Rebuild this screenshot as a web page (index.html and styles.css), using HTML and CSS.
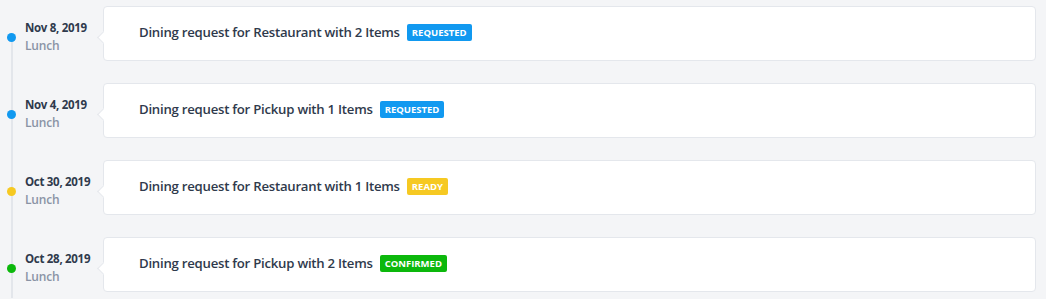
FILE: index.html
```html
<!DOCTYPE html>
<html lang="en">
<head>
    <meta charset="UTF-8">
    <meta name="viewport" content="width=device-width, initial-scale=1.0">
    <title>Dining Requests</title>
    <link rel="stylesheet" href="styles.css">
</head>
<body>
    <section class="timeline">
        <div class="entry">
            <div class="meta">
                <span class="dot requested"></span>
                <div class="date">Nov 8, 2019</div>
                <div class="meal">Lunch</div>
            </div>
            <div class="card">
                <span class="title">Dining request for Restaurant with 2 Items</span>
                <span class="badge requested">Requested</span>
            </div>
        </div>
        <div class="entry">
            <div class="meta">
                <span class="dot requested"></span>
                <div class="date">Nov 4, 2019</div>
                <div class="meal">Lunch</div>
            </div>
            <div class="card">
                <span class="title">Dining request for Pickup with 1 Items</span>
                <span class="badge requested">Requested</span>
            </div>
        </div>
        <div class="entry">
            <div class="meta">
                <span class="dot ready"></span>
                <div class="date">Oct 30, 2019</div>
                <div class="meal">Lunch</div>
            </div>
            <div class="card">
                <span class="title">Dining request for Restaurant with 1 Items</span>
                <span class="badge ready">Ready</span>
            </div>
        </div>
        <div class="entry">
            <div class="meta">
                <span class="dot confirmed"></span>
                <div class="date">Oct 28, 2019</div>
                <div class="meal">Lunch</div>
            </div>
            <div class="card">
                <span class="title">Dining request for Pickup with 2 Items</span>
                <span class="badge confirmed">Confirmed</span>
            </div>
        </div>
    </section>
</body>
</html>
```

FILE: styles.css
```css
/* General */
body {
    margin: 0;
    background-color: #f4f5f7;
    font-family: "Open Sans", Arial, sans-serif;
    color: #2f3a4c;
}

/* Timeline */
.timeline {
    padding: 6px 10px 6px 0;
}

.entry {
    display: flex;
    height: 55px;
    margin-bottom: 22px;
    position: relative;
}

.entry:last-child {
    margin-bottom: 0;
}

/* rail line */
.entry::before {
    content: "";
    position: absolute;
    left: 11px;
    top: 0;
    bottom: -22px;
    width: 2px;
    background-color: #e3e6eb;
}

.entry:first-child::before {
    top: 31px;
}

.entry:last-child::before {
    bottom: -6px;
}

.meta {
    position: relative;
    width: 78px;
    padding: 15px 0 0 25px;
    flex-shrink: 0;
}

.dot {
    position: absolute;
    left: 7px;
    top: 27px;
    width: 9px;
    height: 9px;
    border-radius: 50%;
}

.dot.requested { background-color: #1199f0; }
.dot.ready { background-color: #f6c922; }
.dot.confirmed { background-color: #0cb80c; }

.date {
    font-size: 11.5px;
    font-weight: 700;
    letter-spacing: -0.3px;
    line-height: 14px;
}

.meal {
    margin-top: 4px;
    font-size: 12px;
    font-weight: 600;
    letter-spacing: -0.2px;
    color: #8a93a5;
    line-height: 14px;
}

/* Card */
.card {
    position: relative;
    flex: 1;
    display: flex;
    align-items: center;
    gap: 7px;
    padding: 0 0 3px 35px;
    background-color: white;
    border: 1px solid #e4e7ec;
    border-radius: 4px;
}

.card::before {
    content: "";
    position: absolute;
    left: -5px;
    top: 26px;
    width: 8px;
    height: 8px;
    background-color: white;
    border-left: 1px solid #e4e7ec;
    border-bottom: 1px solid #e4e7ec;
    transform: rotate(45deg);
}

.title {
    font-size: 13.2px;
    font-weight: 600;
    letter-spacing: -0.25px;
}

.badge {
    display: inline-block;
    padding: 0 5px;
    height: 17px;
    line-height: 17px;
    border-radius: 2px;
    font-size: 9.5px;
    font-weight: 700;
    color: white;
    text-transform: uppercase;
}

.badge.requested { background-color: #1199f0; }
.badge.ready { background-color: #f6c922; }
.badge.confirmed { background-color: #0cb80c; }
```
